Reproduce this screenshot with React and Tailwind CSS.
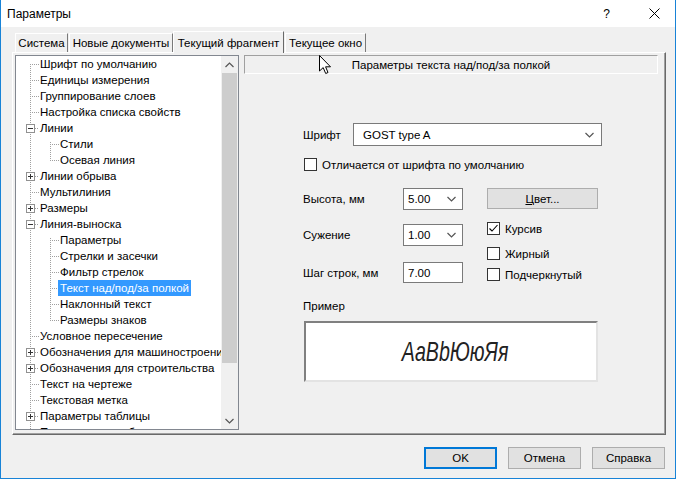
import React from "react";

const items = [
  { t: "Шрифт по умолчанию", l: 0, first: true },
  { t: "Единицы измерения", l: 0 },
  { t: "Группирование слоев", l: 0 },
  { t: "Настройка списка свойств", l: 0 },
  { t: "Линии", l: 0, exp: "-" },
  { t: "Стили", l: 1, fc: true },
  { t: "Осевая линия", l: 1, lc: true },
  { t: "Линии обрыва", l: 0, exp: "+" },
  { t: "Мультилиния", l: 0 },
  { t: "Размеры", l: 0, exp: "+" },
  { t: "Линия-выноска", l: 0, exp: "-" },
  { t: "Параметры", l: 1, fc: true },
  { t: "Стрелки и засечки", l: 1 },
  { t: "Фильтр стрелок", l: 1 },
  { t: "Текст над/под/за полкой", l: 1, sel: true },
  { t: "Наклонный текст", l: 1 },
  { t: "Размеры знаков", l: 1, lc: true },
  { t: "Условное пересечение", l: 0 },
  { t: "Обозначения для машиностроения", l: 0, exp: "+" },
  { t: "Обозначения для строительства", l: 0, exp: "+" },
  { t: "Текст на чертеже", l: 0 },
  { t: "Текстовая метка", l: 0 },
  { t: "Параметры таблицы", l: 0, exp: "+" },
  { t: "Перекрестие и обозначения", l: 0 },
];

const DOT = "#a0a0a0";

function TreeRow({ it }) {
  return (
    <div className="flex h-4 items-center whitespace-nowrap">
      <svg width={it.l ? 44 : 24} height="16" className="shrink-0">
        <line x1="14.5" y1={it.first ? 8 : 0} x2="14.5" y2="16" stroke={DOT} strokeDasharray="1 1" />
        {it.l === 0 && (
          <line x1={it.exp ? 19 : 16} y1="8.5" x2="23" y2="8.5" stroke={DOT} strokeDasharray="1 1" />
        )}
        {it.l === 1 && (
          <>
            <line x1="34.5" y1={it.fc ? 6 : 0} x2="34.5" y2={it.lc ? 9 : 16} stroke={DOT} strokeDasharray="1 1" />
            <line x1="36" y1="8.5" x2="43" y2="8.5" stroke={DOT} strokeDasharray="1 1" />
          </>
        )}
        {it.exp && (
          <>
            <rect x="10.5" y="4.5" width="8" height="8" fill="#fff" stroke="#919191" />
            <line x1="12" y1="8.5" x2="17" y2="8.5" stroke="#333" />
            {it.exp === "+" && <line x1="14.5" y1="6" x2="14.5" y2="11" stroke="#333" />}
          </>
        )}
      </svg>
      <span className={it.sel ? "-ml-[2px] bg-[#3399ff] px-[2px] text-white" : ""}>{it.t}</span>
    </div>
  );
}

function Chevron({ up }) {
  return (
    <svg width="9" height="6" viewBox="0 0 9 6">
      <path d={up ? "M0.5 5 L4.5 1 L8.5 5" : "M0.5 1 L4.5 5 L8.5 1"} fill="none" stroke="#555" strokeWidth="1.2" />
    </svg>
  );
}

function Check({ on }) {
  return (
    <div className="flex h-[13px] w-[13px] shrink-0 items-center justify-center border border-[#333] bg-white">
      {on && (
        <svg width="11" height="11" viewBox="0 0 11 11">
          <path d="M1.5 5.5 L4 8 L9.5 2" fill="none" stroke="#000" strokeWidth="1.1" />
        </svg>
      )}
    </div>
  );
}

function Combo({ value, w }) {
  return (
    <div className={`flex h-[22px] ${w} items-center justify-between border border-[#7a7a7a] bg-white pl-[4px] pr-[6px]`}>
      <span>{value}</span>
      <Chevron />
    </div>
  );
}

const tab = "flex h-[19px] items-center justify-center whitespace-nowrap border-l border-t border-r border-l-white border-t-white border-r-[#7a7a7a]";

export default function App() {
  return (
    <div className="relative flex h-[479px] w-[676px] flex-col border-x border-b border-[#1883d7] bg-[#f0f0f0] font-['Liberation_Sans',Arial,sans-serif] text-[11.5px] leading-4 text-black">
      {/* title bar */}
      <div className="flex h-[27px] shrink-0 items-center bg-white pl-[6px] text-[12px]">
        <span>Параметры</span>
        <span className="ml-auto mr-[39px]">?</span>
        <svg width="11" height="11" className="mr-[15px]">
          <path d="M0.5 0.5 L10.5 10.5 M10.5 0.5 L0.5 10.5" stroke="#000" />
        </svg>
      </div>

      {/* tabs */}
      <div className="flex h-[25px] shrink-0 items-end pl-[14px]">
        <div className={`${tab} w-[53px]`}>Система</div>
        <div className={`${tab} ml-[1px] w-[104px]`}>Новые документы</div>
        <div className="relative z-10 -mb-[1px] flex h-[22px] w-[111px] items-start justify-center whitespace-nowrap border-l border-t border-r border-l-white border-t-white border-r-[#696969] bg-[#f0f0f0] pt-[3px]">
          Текущий фрагмент
        </div>
        <div className={`${tab} ml-[1px] w-[81px]`}>Текущее окно</div>
      </div>

      {/* panel */}
      <div className="ml-[11px] flex h-[383px] w-[654px] shrink-0 border-l border-t border-r border-b border-l-white border-t-white border-r-[#696969] border-b-[#696969] pl-[2px] pt-[2px] shadow-[inset_-1px_-1px_0_#a0a0a0]">
        {/* tree */}
        <div className="flex h-[375px] w-[224px] shrink-0 overflow-hidden border border-[#828790] bg-white">
          <div className="flex-1 overflow-hidden">
            {items.map((it, i) => (
              <TreeRow key={i} it={it} />
            ))}
          </div>
          <div className="flex w-[17px] shrink-0 flex-col bg-[#f0f0f0]">
            <div className="flex h-[17px] items-center justify-center">
              <Chevron up />
            </div>
            <div className="mx-[1px] h-[290px] bg-[#cdcdcd]" />
            <div className="flex-1" />
            <div className="flex h-[17px] items-center justify-center">
              <Chevron />
            </div>
          </div>
        </div>

        {/* right side */}
        <div className="ml-[5px] flex w-[414px] flex-col">
          <div className="flex h-[19px] items-center justify-center border-l border-t border-b border-r border-l-[#a0a0a0] border-t-[#a0a0a0] border-b-white border-r-white">
            Параметры текста над/под/за полкой
          </div>

          <div className="ml-[59px] flex flex-col">
            <div className="mt-[49px] flex h-[23px] items-center">
              <span className="w-[50px]">Шрифт</span>
              <div className="flex h-[23px] w-[249px] items-center justify-between border border-[#7a7a7a] bg-white pl-[9px] pr-[7px]">
                <span>GOST type A</span>
                <Chevron />
              </div>
            </div>

            <div className="ml-[1px] mt-[12px] flex h-[13px] items-center gap-[5px]">
              <Check />
              <span>Отличается от шрифта по умолчанию</span>
            </div>

            <div className="mt-[17px] flex">
              <div className="flex w-[184px] flex-col">
                <div className="flex h-[22px] items-center">
                  <span className="w-[100px]">Высота, мм</span>
                  <Combo value="5.00" w="w-[60px]" />
                </div>
                <div className="mt-[14px] flex h-[22px] items-center">
                  <span className="w-[100px]">Сужение</span>
                  <Combo value="1.00" w="w-[60px]" />
                </div>
                <div className="mt-[16px] flex h-[21px] items-center">
                  <span className="w-[100px]">Шаг строк, мм</span>
                  <div className="flex h-[21px] w-[60px] items-center border border-[#7a7a7a] bg-white pl-[4px]">7.00</div>
                </div>
              </div>
              <div className="flex flex-col">
                <div className="flex h-[21px] w-[111px] items-center justify-center border border-[#adadad] bg-[#e1e1e1]">
                  <span><span className="underline">Ц</span>вет...</span>
                </div>
                <div className="mt-[13px] flex h-[13px] items-center gap-[5px]">
                  <Check on />
                  <span>Курсив</span>
                </div>
                <div className="mt-[12px] flex h-[13px] items-center gap-[5px]">
                  <Check />
                  <span>Жирный</span>
                </div>
                <div className="mt-[8px] flex h-[13px] items-center gap-[5px]">
                  <Check />
                  <span>Подчеркнутый</span>
                </div>
              </div>
            </div>

            <div className="mt-[15px]">Пример</div>
            <div className="ml-[1px] mt-[7px] flex h-[61px] w-[294px] items-center justify-center border-2 border-l-[#808080] border-t-[#808080] border-r-[#e3e3e3] border-b-[#e3e3e3] bg-white pl-[8px]">
              <span className="scale-x-[0.7] font-['Liberation_Sans',sans-serif] text-[28px] italic leading-none text-[#222]">
                AaBbЮюЯя
              </span>
            </div>
          </div>
        </div>
      </div>

      {/* buttons */}
      <div className="mr-[10px] mt-[12px] flex justify-end gap-[11px]">
        <div className="flex h-[22px] w-[73px] items-center justify-center border-2 border-[#0078d7] bg-[#e1e1e1]">OK</div>
        <div className="flex h-[22px] w-[73px] items-center justify-center border border-[#adadad] bg-[#e1e1e1]">Отмена</div>
        <div className="flex h-[22px] w-[73px] items-center justify-center border border-[#adadad] bg-[#e1e1e1]">Справка</div>
      </div>

      {/* mouse pointer */}
      <svg width="13" height="20" viewBox="0 0 13 20" className="absolute left-[318px] top-[55px] z-20">
        <path d="M0.5 0.5 L0.5 16 L4.2 12.6 L6.7 18.5 L9 17.5 L6.6 11.8 L11.5 11.8 Z" fill="#fff" stroke="#000" />
      </svg>
    </div>
  );
}
